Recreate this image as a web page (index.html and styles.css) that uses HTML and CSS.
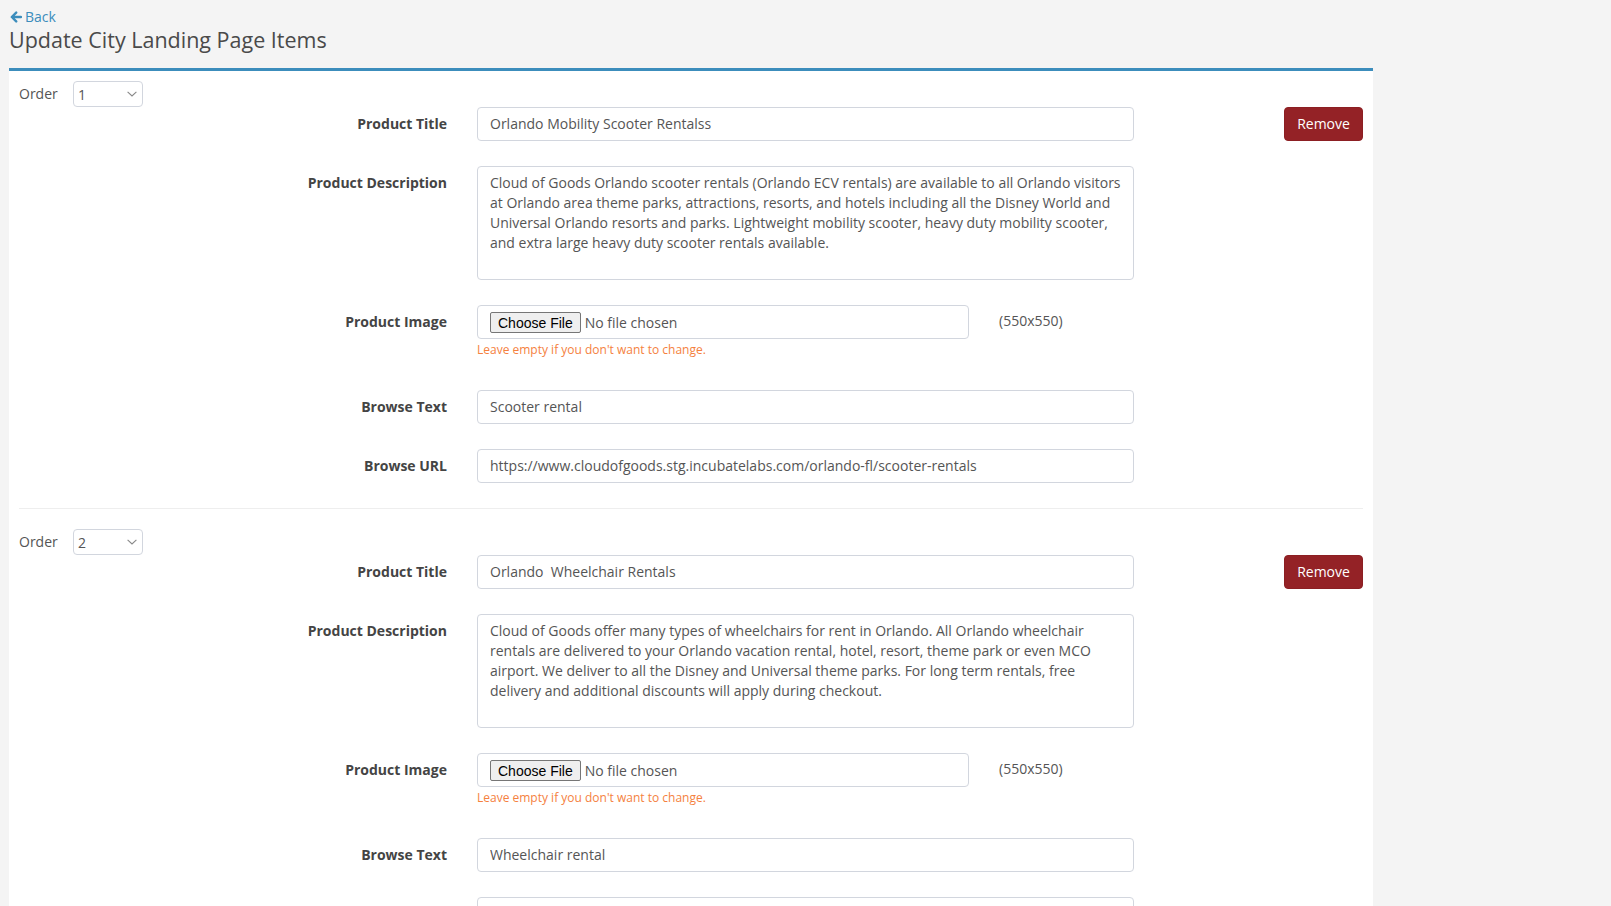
FILE: index.html
```html
<!DOCTYPE html>
<html lang="en">
<head>
<meta charset="utf-8">
<title>Update City Landing Page Items</title>
<link rel="stylesheet" href="styles.css">
</head>
<body>
<div class="page">
  <a class="back" href="#">
    <svg class="back-icon" width="12" height="12" viewBox="0 0 12 12" aria-hidden="true">
      <path d="M6.2 1.6 L1.8 6 L6.2 10.4 M2 6 H11" fill="none" stroke="#3c8dbc" stroke-width="2.4" stroke-linecap="round" stroke-linejoin="round"/>
    </svg>Back</a>
  <h1 class="page-title">Update City Landing Page Items</h1>

  <div class="box">
    <div class="item">
      <div class="order-row">
        <span class="order-label">Order</span>
        <span class="select-wrap">
          <select class="order-select"><option>1</option><option>2</option></select>
          <svg class="chev" width="10" height="6" viewBox="0 0 10 6" aria-hidden="true"><path d="M0.6 0.8 L5 5 L9.4 0.8" fill="none" stroke="#888" stroke-width="1.1"/></svg>
        </span>
      </div>
      <div class="fg">
        <label class="fg-label">Product Title</label>
        <div class="fg-field"><input class="control" type="text" value="Orlando Mobility Scooter Rentalss"></div>
        <button class="btn-remove" type="button">Remove</button>
      </div>
      <div class="fg">
        <label class="fg-label">Product Description</label>
        <div class="fg-field"><textarea class="control area" rows="5">Cloud of Goods Orlando scooter rentals (Orlando ECV rentals) are available to all Orlando visitors at Orlando area theme parks, attractions, resorts, and hotels including all the Disney World and Universal Orlando resorts and parks. Lightweight mobility scooter, heavy duty mobility scooter, and extra large heavy duty scooter rentals available.</textarea></div>
      </div>
      <div class="fg">
        <label class="fg-label">Product Image</label>
        <div class="fg-file">
          <input class="control file" type="file">
          <p class="help">Leave empty if you don't want to change.</p>
        </div>
        <span class="dims">(550x550)</span>
      </div>
      <div class="fg">
        <label class="fg-label">Browse Text</label>
        <div class="fg-field"><input class="control" type="text" value="Scooter rental"></div>
      </div>
      <div class="fg">
        <label class="fg-label">Browse URL</label>
        <div class="fg-field"><input class="control" type="text" value="https://www.cloudofgoods.stg.incubatelabs.com/orlando-fl/scooter-rentals"></div>
      </div>
      <hr class="sep">
    </div>

    <div class="item">
      <div class="order-row">
        <span class="order-label">Order</span>
        <span class="select-wrap">
          <select class="order-select"><option>1</option><option selected>2</option></select>
          <svg class="chev" width="10" height="6" viewBox="0 0 10 6" aria-hidden="true"><path d="M0.6 0.8 L5 5 L9.4 0.8" fill="none" stroke="#888" stroke-width="1.1"/></svg>
        </span>
      </div>
      <div class="fg">
        <label class="fg-label">Product Title</label>
        <div class="fg-field"><input class="control" type="text" value="Orlando  Wheelchair Rentals"></div>
        <button class="btn-remove" type="button">Remove</button>
      </div>
      <div class="fg">
        <label class="fg-label">Product Description</label>
        <div class="fg-field"><textarea class="control area" rows="5">Cloud of Goods offer many types of wheelchairs for rent in Orlando. All Orlando wheelchair rentals are delivered to your Orlando vacation rental, hotel, resort, theme park or even MCO airport. We deliver to all the Disney and Universal theme parks. For long term rentals, free delivery and additional discounts will apply during checkout.</textarea></div>
      </div>
      <div class="fg">
        <label class="fg-label">Product Image</label>
        <div class="fg-file">
          <input class="control file" type="file">
          <p class="help">Leave empty if you don't want to change.</p>
        </div>
        <span class="dims">(550x550)</span>
      </div>
      <div class="fg">
        <label class="fg-label">Browse Text</label>
        <div class="fg-field"><input class="control" type="text" value="Wheelchair rental"></div>
      </div>
      <div class="fg">
        <label class="fg-label">Browse URL</label>
        <div class="fg-field"><input class="control" type="text" value="https://www.cloudofgoods.stg.incubatelabs.com/orlando-fl/wheelchair-rentals"></div>
      </div>
    </div>
  </div>
</div>
</body>
</html>
```

FILE: styles.css
```css
* { box-sizing: border-box; }

html, body {
  margin: 0;
  background: #f4f4f4;
  font-family: "Open Sans", "Liberation Sans", sans-serif;
  font-size: 14px;
  line-height: 20px;
  color: #555;
}

.page {
  padding: 7px 9px 0 9px;
}

.back {
  display: flex;
  width: fit-content;
  height: 20px;
  align-items: center;
  color: #3c8dbc;
  text-decoration: none;
  font-size: 14px;
  line-height: 20px;
  margin-left: 1px;
}

.back-icon {
  margin-right: 3px;
}

.page-title {
  margin: 0 0 15px 0;
  font-size: 21.5px;
  line-height: 26px;
  font-weight: 400;
  color: #4a4a4a;
}

.box {
  width: 1364px;
  background: #fff;
  border-top: 3px solid #3c8dbc;
  padding: 10px 10px 0 10px;
}

.order-row {
  display: flex;
  align-items: center;
  height: 26px;
}

.order-label {
  width: 54px;
  color: #555;
}

.select-wrap {
  position: relative;
  display: block;
  width: 70px;
  height: 26px;
}

.order-select {
  appearance: none;
  -webkit-appearance: none;
  display: block;
  width: 70px;
  height: 26px;
  border: 1px solid #d2d6de;
  border-radius: 4px;
  background: #fff;
  color: #555;
  font-family: "Open Sans", "Liberation Sans", sans-serif;
  font-size: 14px;
  padding: 0 18px 0 4px;
}

.chev {
  position: absolute;
  right: 6px;
  top: 10px;
  pointer-events: none;
}

.fg {
  display: flex;
  align-items: flex-start;
  margin-bottom: 25px;
}

.fg-label {
  width: 428px;
  flex: none;
  text-align: right;
  font-weight: 700;
  color: #444;
  padding-top: 7px;
  line-height: 20px;
}

.fg-field {
  width: 657px;
  margin-left: 30px;
  flex: none;
}

.fg-file {
  width: 492px;
  margin-left: 30px;
  flex: none;
}

.control {
  display: block;
  width: 100%;
  height: 34px;
  padding: 5px 12px 7px 12px;
  border: 1px solid #d2d6de;
  border-radius: 4px;
  background: #fff;
  color: #555;
  font-family: "Open Sans", "Liberation Sans", sans-serif;
  font-size: 14px;
  line-height: 20px;
}

.area {
  height: 114px;
  resize: none;
  overflow: hidden;
  padding: 6px 8px 6px 12px;
}

.file {
  padding: 6px 12px;
}

.file::file-selector-button {
  font-family: "Liberation Sans", Arial, sans-serif;
  font-size: 14px;
  height: 21px;
  padding: 0 7px;
  margin-right: 4px;
  background: #efefef;
  color: #000;
  border: 1px solid #767676;
  border-radius: 2px;
}

.help {
  margin: 2px 0 7px 0;
  font-size: 12px;
  line-height: 17px;
  color: #f5813e;
}

.dims {
  margin-left: 30px;
  padding-top: 6px;
  color: #555;
}

.btn-remove {
  margin-left: auto;
  width: 79px;
  height: 34px;
  padding: 6px 12px;
  border: 1px solid #8c1f23;
  border-radius: 4px;
  background: #942226;
  color: #fff;
  font-family: "Open Sans", "Liberation Sans", sans-serif;
  font-size: 14px;
  line-height: 20px;
}

.sep {
  margin: 0 0 20px 0;
  border: 0;
  border-top: 1px solid #eee;
  height: 0;
}
```
